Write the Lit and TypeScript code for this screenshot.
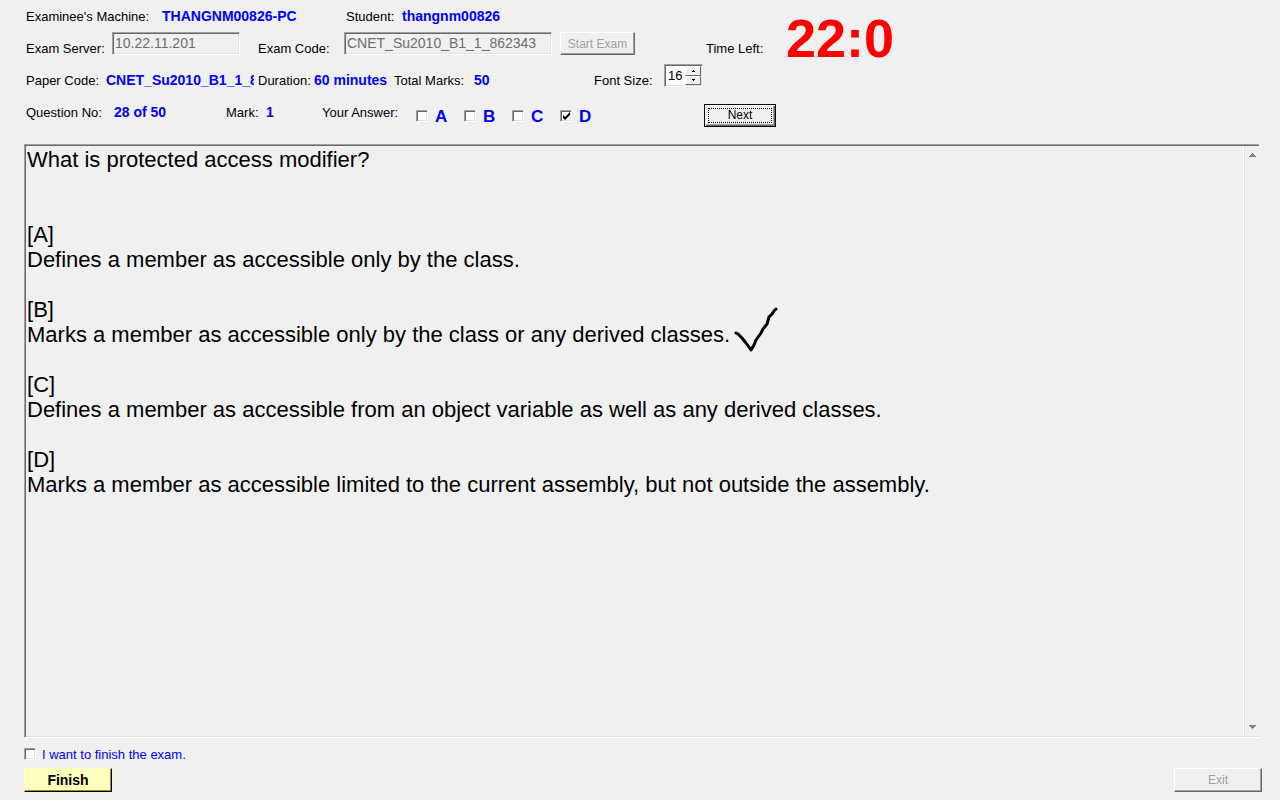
import { LitElement, html, css, svg } from "lit";
import { customElement, state } from "lit/decorators.js";

const ANSWERS = ["A", "B", "C", "D"];

const CHOICES = [
  { key: "A", text: "Defines a member as accessible only by the class." },
  { key: "B", text: "Marks a member as accessible only by the class or any derived classes.", ticked: true },
  { key: "C", text: "Defines a member as accessible from an object variable as well as any derived classes." },
  { key: "D", text: "Marks a member as accessible limited to the current assembly, but not outside the assembly." },
];

const tick = svg`<path d="M2 26L4 27L8 31L12 36L17 43L20 38L22 33L27 26L29 22L33 17L35 10L38 7L40 4L42 2" />`;

@customElement("app-root")
export class AppRoot extends LitElement {
  static styles = css`
    :host {
      display: flex;
      flex-direction: column;
      box-sizing: border-box;
      min-height: 100vh;
      padding: 0 18px 8px 24px;
      background: #f0f0f0;
      color: #000;
      font: 13px/16px "Liberation Sans", Arial, sans-serif;
    }
    * { box-sizing: border-box; }
    button, input { font: inherit; margin: 0; border-radius: 0; }

    .header { display: flex; height: 144px; white-space: nowrap; }
    .fields { width: 680px; padding-left: 2px; }
    .row { display: grid; height: 32px; align-items: start; }
    .row > label, .row > span { padding-top: 9px; }
    .row > b { padding-top: 8px; }
    .machine { grid-template-columns: 136px 184px 56px 1fr; }
    .server { grid-template-columns: 86px 146px 86px 216px 1fr; }
    .paper { grid-template-columns: 80px 152px 56px 80px 80px 120px 70px 1fr; }
    .question { grid-template-columns: 88px 112px 40px 56px 94px 1fr; }
    b { color: #00f; font-size: 14px; }
    .clip { width: 148px; overflow: hidden; }

    .box {
      height: 23px;
      padding: 0 2px 1px;
      border: 1px solid;
      border-color: #a0a0a0 #fff #fff #a0a0a0;
      box-shadow: inset 1px 1px #696969, inset -1px -1px #e3e3e3;
      background: #f0f0f0;
      color: #6d6d6d;
      font-size: 14px;
    }
    .short { width: 128px; }
    .long { width: 208px; }

    .button {
      height: 24px;
      padding: 0;
      border: 1px solid;
      border-color: #fff #696969 #696969 #fff;
      box-shadow: inset -1px -1px #a0a0a0;
      background: #f0f0f0;
      color: #000;
      font-size: 12px;
    }
    .button:disabled { color: #a0a0a0; }
    .start { width: 75px; height: 23px; }
    .next {
      width: 72px;
      height: 23px;
      margin-top: 40px;
      padding: 2px;
      border: 1px solid #000;
      box-shadow: inset 1px 1px #fff, inset -1px -1px #696969, inset -2px -2px #a0a0a0;
    }
    .focus { display: block; height: 15px; margin: 0 1px; border: 1px dotted #000; line-height: 13px; }
    .finish {
      width: 88px;
      border-color: #ffffc0 #000 #000 #ffffc0;
      box-shadow: inset -1px -1px #909000;
      background: #ffffc0;
      font-size: 14px;
      font-weight: bold;
    }
    .exit { width: 88px; }

    .spinner {
      display: flex;
      width: 39px;
      height: 23px;
      border: 1px solid;
      border-color: #a0a0a0 #fff #fff #a0a0a0;
      box-shadow: inset 1px 1px #696969, inset -1px -1px #e3e3e3;
      background: #fff;
      padding: 1px;
    }
    .size { width: 19px; padding: 1px 0 0 2px; border: 0; background: none; color: #000; }
    .arrows { display: flex; flex-direction: column; flex: 1; }
    .step {
      display: grid;
      place-items: center;
      flex: 1;
      min-height: 0;
      padding: 0;
      border: 1px solid;
      border-color: #fff #696969 #696969 #fff;
      background: #f0f0f0;
    }
    .step svg, .bar svg { display: block; }

    .answers { display: flex; padding-top: 12px; }
    .answer { display: flex; align-items: center; gap: 7px; width: 48px; color: #00f; font-size: 17px; line-height: 18px; font-weight: bold; }
    .check {
      appearance: none;
      flex: none;
      width: 12px;
      height: 12px;
      border: 1px solid;
      border-color: #a0a0a0 #fff #fff #a0a0a0;
      box-shadow: inset 1px 1px #696969, inset -1px -1px #e3e3e3;
      background: #fff;
    }
    .check:checked {
      background: #fff url("data:image/svg+xml,%3Csvg xmlns='http://www.w3.org/2000/svg' viewBox='0 0 10 10'%3E%3Cpath d='M2 4v3l2 2 5-5V1L4 6z'/%3E%3C/svg%3E");
    }
    .answers .check { margin-bottom: 2px; }

    .clock { display: flex; height: 64px; padding-left: 2px; }
    .caption { width: 80px; padding-top: 41px; }
    .time { color: #f00; font-size: 54px; font-weight: bold; line-height: 77px; }

    .panel {
      display: flex;
      flex: 1;
      margin-right: 3px;
      border: solid;
      border-width: 1px 0 1px 1px;
      border-color: #a0a0a0 #fff #fff #a0a0a0;
      box-shadow: inset 1px 1px #696969, inset 0 -1px #e3e3e3;
    }
    .text { flex: 1; padding: 2px; font-size: 22px; line-height: 25px; }
    .text p { margin: 0; }
    .prompt { padding-bottom: 50px; }
    .choice { padding-bottom: 25px; }
    .line { display: flex; }
    .mark { width: 50px; height: 50px; margin: -15px 0 -10px 4px; fill: none; stroke: #000; stroke-width: 3; stroke-linecap: round; stroke-linejoin: round; }
    .bar {
      display: flex;
      flex-direction: column;
      justify-content: space-between;
      width: 16px;
      margin: 1px 0 2px;
      border-left: 1px solid #fff;
      box-shadow: inset 1px 0 #e3e3e3;
    }
    .scroll { display: grid; place-items: center; height: 17px; padding: 0 0 0 1px; border: 0; background: none; }

    .confirm { display: flex; align-items: center; gap: 6px; height: 16px; margin-top: 8px; color: #00f; }
    .confirm span { padding-top: 2px; }
    .footer { display: flex; justify-content: space-between; margin-top: 6px; }
  `;

  @state() private selected = new Set(["D"]);

  private toggle(key: string) {
    const next = new Set(this.selected);
    next.has(key) ? next.delete(key) : next.add(key);
    this.selected = next;
  }

  private arrow(up: boolean, width: number, color: string) {
    const h = (width + 1) / 2;
    return html`<svg width=${width} height=${h} viewBox="0 0 ${width} ${h}" fill=${color} shape-rendering="crispEdges">
      <path d=${up ? `M0 ${h}L${width / 2} 0L${width} ${h}z` : `M0 0L${width / 2} ${h}L${width} 0z`} />
    </svg>`;
  }

  render() {
    return html`
      <header class="header">
        <div class="fields">
          <div class="row machine">
            <span>Examinee's Machine:</span><b>THANGNM00826-PC</b>
            <span>Student:</span><b>thangnm00826</b>
          </div>
          <div class="row server">
            <label for="server">Exam Server:</label>
            <input class="box short" id="server" value="10.22.11.201" disabled />
            <label for="code">Exam Code:</label>
            <input class="box long" id="code" value="CNET_Su2010_B1_1_862343" disabled />
            <button class="button start" disabled>Start Exam</button>
          </div>
          <div class="row paper">
            <span>Paper Code:</span><b class="clip">CNET_Su2010_B1_1_862343</b>
            <span>Duration:</span><b>60 minutes</b>
            <span>Total Marks:</span><b>50</b>
            <label for="size">Font Size:</label>
            <div class="spinner">
              <input class="size" id="size" value="16" />
              <div class="arrows">
                <button class="step" aria-label="Larger">${this.arrow(true, 3, "#000")}</button>
                <button class="step" aria-label="Smaller">${this.arrow(false, 3, "#000")}</button>
              </div>
            </div>
          </div>
          <div class="row question">
            <span>Question No:</span><b>28 of 50</b>
            <span>Mark:</span><b>1</b>
            <span>Your Answer:</span>
            <div class="answers">
              ${ANSWERS.map(
                (key) => html`<label class="answer">
                  <input class="check" type="checkbox" .checked=${this.selected.has(key)} @change=${() => this.toggle(key)} />${key}
                </label>`
              )}
            </div>
          </div>
        </div>
        <div>
          <div class="clock"><span class="caption">Time Left:</span><span class="time">22:0</span></div>
          <button class="button next"><span class="focus">Next</span></button>
        </div>
      </header>

      <main class="panel">
        <div class="text">
          <p class="prompt">What is protected access modifier?</p>
          ${CHOICES.map(
            (c) => html`<div class="choice">
              <p>[${c.key}]</p>
              <p class="line">${c.text}${c.ticked ? html`<svg class="mark" viewBox="0 0 50 50">${tick}</svg>` : ""}</p>
            </div>`
          )}
        </div>
        <div class="bar">
          <button class="scroll" aria-label="Scroll up">${this.arrow(true, 7, "#838383")}</button>
          <button class="scroll" aria-label="Scroll down">${this.arrow(false, 7, "#838383")}</button>
        </div>
      </main>

      <label class="confirm"><input class="check" type="checkbox" /><span>I want to finish the exam.</span></label>
      <footer class="footer">
        <button class="button finish">Finish</button>
        <button class="button exit" disabled>Exit</button>
      </footer>
    `;
  }
}
